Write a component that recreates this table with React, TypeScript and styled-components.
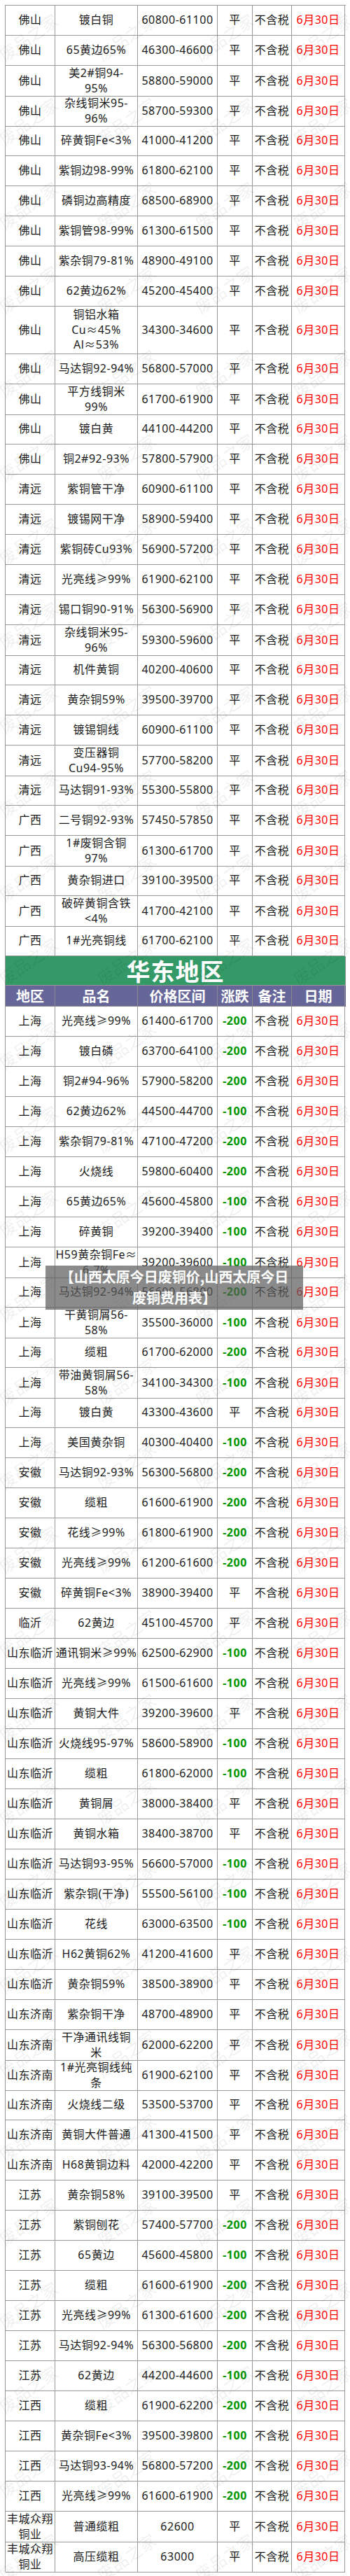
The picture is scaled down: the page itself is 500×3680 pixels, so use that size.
import styled, { createGlobalStyle } from 'styled-components';

type Row = [string, string, string, string?];

const GlobalStyle = createGlobalStyle`
  html, body {
    margin: 0;
    padding: 0;
    background: #ffffff;
  }
  body {
    font-family: "Noto Sans", "Noto Sans CJK SC", sans-serif;
  }
`;

const south: Row[] = [
  ['佛山', '镀白铜', '60800-61100'],
  ['佛山', '65黄边65%', '46300-46600'],
  ['佛山', '美2#铜94-\n95%', '58800-59000'],
  ['佛山', '杂线铜米95-\n96%', '58700-59300'],
  ['佛山', '碎黄铜Fe<3%', '41000-41200'],
  ['佛山', '紫铜边98-99%', '61800-62100'],
  ['佛山', '磷铜边高精度', '68500-68900'],
  ['佛山', '紫铜管98-99%', '61300-61500'],
  ['佛山', '紫杂铜79-81%', '48900-49100'],
  ['佛山', '62黄边62%', '45200-45400'],
  ['佛山', '铜铝水箱\nCu≈45%\nAl≈53%', '34300-34600'],
  ['佛山', '马达铜92-94%', '56800-57000'],
  ['佛山', '平方线铜米\n99%', '61700-61900'],
  ['佛山', '镀白黄', '44100-44200'],
  ['佛山', '铜2#92-93%', '57800-57900'],
  ['清远', '紫铜管干净', '60900-61100'],
  ['清远', '镀锡网干净', '58900-59400'],
  ['清远', '紫铜砖Cu93%', '56900-57200'],
  ['清远', '光亮线≥99%', '61900-62100'],
  ['清远', '锡口铜90-91%', '56300-56900'],
  ['清远', '杂线铜米95-\n96%', '59300-59600'],
  ['清远', '机件黄铜', '40200-40600'],
  ['清远', '黄杂铜59%', '39500-39700'],
  ['清远', '镀锡铜线', '60900-61100'],
  ['清远', '变压器铜\nCu94-95%', '57700-58200'],
  ['清远', '马达铜91-93%', '55300-55800'],
  ['广西', '二号铜92-93%', '57450-57850'],
  ['广西', '1#废铜含铜\n97%', '61300-61700'],
  ['广西', '黄杂铜进口', '39100-39500'],
  ['广西', '破碎黄铜含铁\n<4%', '41700-42100'],
  ['广西', '1#光亮铜线', '61700-62100'],
];

const east: Row[] = [
  ['上海', '光亮线≥99%', '61400-61700', '-200'],
  ['上海', '镀白磷', '63700-64100', '-200'],
  ['上海', '铜2#94-96%', '57900-58200', '-200'],
  ['上海', '62黄边62%', '44500-44700', '-100'],
  ['上海', '紫杂铜79-81%', '47100-47200', '-200'],
  ['上海', '火烧线', '59800-60400', '-200'],
  ['上海', '65黄边65%', '45600-45800', '-100'],
  ['上海', '碎黄铜', '39200-39400', '-100'],
  ['上海', 'H59黄杂铜Fe≈\n6-7%', '39200-39600', '-100'],
  ['上海', '马达铜92-94%', '56600-56800', '-200'],
  ['上海', '干黄铜屑56-\n58%', '35500-36000', '-100'],
  ['上海', '缆粗', '61700-62000', '-200'],
  ['上海', '带油黄铜屑56-\n58%', '34100-34300', '-100'],
  ['上海', '镀白黄', '43300-43600'],
  ['上海', '美国黄杂铜', '40300-40400', '-100'],
  ['安徽', '马达铜92-93%', '56300-56800', '-200'],
  ['安徽', '缆粗', '61600-61900', '-200'],
  ['安徽', '花线≥99%', '61800-61900', '-200'],
  ['安徽', '光亮线≥99%', '61200-61600', '-200'],
  ['安徽', '碎黄铜Fe<3%', '38900-39400'],
  ['临沂', '62黄边', '45100-45700'],
  ['山东临沂', '通讯铜米≥99%', '62500-62900', '-100'],
  ['山东临沂', '光亮线≥99%', '61500-61600', '-100'],
  ['山东临沂', '黄铜大件', '39200-39600'],
  ['山东临沂', '火烧线95-97%', '58600-58900', '-100'],
  ['山东临沂', '缆粗', '61800-62000', '-100'],
  ['山东临沂', '黄铜屑', '38000-38400'],
  ['山东临沂', '黄铜水箱', '38400-38700'],
  ['山东临沂', '马达铜93-95%', '56600-57000', '-100'],
  ['山东临沂', '紫杂铜(干净)', '55500-56100', '-100'],
  ['山东临沂', '花线', '63000-63500', '-100'],
  ['山东临沂', 'H62黄铜62%', '41200-41600'],
  ['山东临沂', '黄杂铜59%', '38500-38900'],
  ['山东济南', '紫杂铜干净', '48700-48900'],
  ['山东济南', '干净通讯线铜\n米', '62000-62200'],
  ['山东济南', '1#光亮铜线纯\n条', '61900-62100'],
  ['山东济南', '火烧线二级', '53500-53700'],
  ['山东济南', '黄铜大件普通', '41300-41500'],
  ['山东济南', 'H68黄铜边料', '42000-42200'],
  ['江苏', '黄杂铜58%', '39100-39500'],
  ['江苏', '紫铜刨花', '57400-57700', '-200'],
  ['江苏', '65黄边', '45600-45800', '-100'],
  ['江苏', '缆粗', '61600-61900', '-200'],
  ['江苏', '光亮线≥99%', '61300-61600', '-200'],
  ['江苏', '马达铜92-94%', '56300-56800', '-200'],
  ['江苏', '62黄边', '44200-44600', '-100'],
  ['江西', '缆粗', '61900-62200', '-200'],
  ['江西', '黄杂铜Fe<3%', '39500-39800', '-100'],
  ['江西', '马达铜93-94%', '56800-57200', '-200'],
  ['江西', '光亮线≥99%', '61600-61900', '-200'],
  ['丰城众翔\n铜业', '普通缆粗', '62600'],
  ['丰城众翔\n铜业', '高压缆粗', '63000'],
];

const headers = ['地区', '品名', '价格区间', '涨跌', '备注', '日期'];

const Lines = ({ text }: { text: string }) => (
  <>
    {text.split('\n').map((line, i) => (
      <span key={i}>{line}</span>
    ))}
  </>
);

const PriceRows = ({ rows }: { rows: Row[] }) => (
  <>
    {rows.map(([region, name, price, change], i) => (
      <TableRow key={i} $tall={name.split('\n').length > 2}>
        <Cell>
          <Lines text={region} />
        </Cell>
        <Cell>
          <Lines text={name} />
        </Cell>
        <Cell>{price}</Cell>
        <Cell $tone={change ? 'down' : undefined}>{change ?? '平'}</Cell>
        <Cell>不含税</Cell>
        <Cell $tone="date">6月30日</Cell>
      </TableRow>
    ))}
  </>
);

const App = () => (
  <>
    <GlobalStyle />
    <Page>
      <Table>
        <PriceRows rows={south} />
        <Banner>华东地区</Banner>
        <HeadRow>
          {headers.map((h) => (
            <HeadCell key={h}>{h}</HeadCell>
          ))}
        </HeadRow>
        <PriceRows rows={east} />
      </Table>
      <Watermarks>
        {Array.from({ length: 124 }).map((_, i) => (
          <Mark key={i}>
            <span>废品之家</span>
          </Mark>
        ))}
      </Watermarks>
      <Caption>
        <span>【山西太原今日废铜价,山西太原今日</span>
        <span>废铜费用表】</span>
      </Caption>
    </Page>
  </>
);

export default App;

const Page = styled.div`
  position: relative;
  width: 500px;
  height: 3680px;
  padding: 7px;
  box-sizing: border-box;
  overflow: hidden;
  background: #ffffff;
`;

const Table = styled.div`
  width: 486px;
  border-top: 1px solid #9a9a9a;
  border-left: 1px solid #9a9a9a;
`;

const columns = '71px 118px 114px 50px 56px 76px';

const TableRow = styled.div<{ $tall?: boolean }>`
  display: grid;
  grid-template-columns: ${columns};
  height: ${(p) => (p.$tall ? 68 : 43)}px;
`;

const Cell = styled.div<{ $tone?: 'down' | 'date' }>`
  display: flex;
  flex-direction: column;
  align-items: center;
  justify-content: center;
  box-sizing: border-box;
  border-right: 1px solid #9a9a9a;
  border-bottom: 1px solid #9a9a9a;
  font-size: 16px;
  line-height: 21.5px;
  letter-spacing: 0.5px;
  white-space: nowrap;
  text-align: center;
  color: ${(p) => (p.$tone === 'down' ? '#009600' : p.$tone === 'date' ? '#ff0000' : '#1a1a1a')};
  font-weight: ${(p) => (p.$tone === 'down' ? 700 : 400)};
`;

const Banner = styled.div`
  height: 42px;
  box-sizing: border-box;
  display: flex;
  align-items: center;
  justify-content: center;
  background: #339966;
  color: #ffffff;
  font-size: 34px;
  font-weight: 700;
  letter-spacing: 1px;
  border-right: 1px solid #9a9a9a;
  border-bottom: 1px solid #9a9a9a;
`;

const HeadRow = styled.div`
  display: grid;
  grid-template-columns: ${columns};
  height: 30px;
  background: #666699;
`;

const HeadCell = styled.div`
  display: flex;
  align-items: center;
  justify-content: center;
  box-sizing: border-box;
  border-right: 1px solid #8a8a8a;
  border-bottom: 1px solid #8a8a8a;
  color: #ffffff;
  font-size: 20px;
  font-weight: 700;
  white-space: nowrap;
`;

const Watermarks = styled.div`
  position: absolute;
  top: -8px;
  left: -30px;
  display: grid;
  grid-template-columns: repeat(4, 140px);
  grid-auto-rows: 120px;
  pointer-events: none;
`;

const Mark = styled.div`
  display: flex;
  align-items: center;
  justify-content: center;

  span {
    display: block;
    transform: rotate(-35deg);
    font-family: "Noto Sans CJK SC", sans-serif;
    font-size: 24px;
    color: rgba(0, 0, 0, 0.07);
    white-space: nowrap;
  }
`;

const Caption = styled.div`
  position: absolute;
  left: 65px;
  top: 1808px;
  width: 368px;
  height: 63px;
  box-sizing: border-box;
  padding: 1px 6px;
  display: flex;
  flex-direction: column;
  align-items: center;
  background: rgba(90, 90, 90, 0.7);
  color: #ffffff;
  font-family: "Noto Sans CJK SC", sans-serif;
  font-size: 20px;
  font-weight: 700;
  line-height: 30px;
  white-space: nowrap;
`;
